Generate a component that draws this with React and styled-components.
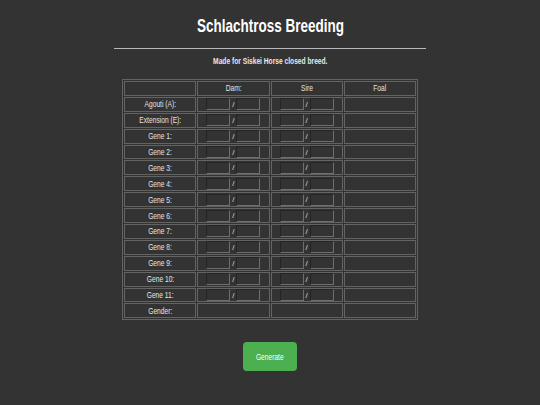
import React from 'react'
import styled, { createGlobalStyle } from 'styled-components'

const rows = [
  'Agouti (A):',
  'Extension (E):',
  'Gene 1:',
  'Gene 2:',
  'Gene 3:',
  'Gene 4:',
  'Gene 5:',
  'Gene 6:',
  'Gene 7:',
  'Gene 8:',
  'Gene 9:',
  'Gene 10:',
  'Gene 11:',
]

function AlleleInput() {
  return (
    <Pair>
      <Allele type="text" />
      <Slash>/</Slash>
      <Allele type="text" />
    </Pair>
  )
}

export default function App() {
  return (
    <>
      <GlobalStyle />
      <Page>
        <Title><Narrow scale={0.71}>Schlachtross Breeding</Narrow></Title>
        <Rule />
        <Subtitle><Narrow>Made for Siskei Horse closed breed.</Narrow></Subtitle>

        <Table>
          <thead>
            <tr>
              <Cell></Cell>
              <Cell><Narrow>Dam:</Narrow></Cell>
              <Cell><Narrow>Sire</Narrow></Cell>
              <Cell><Narrow>Foal</Narrow></Cell>
            </tr>
          </thead>
          <tbody>
            {rows.map((label) => (
              <tr key={label}>
                <Cell><Narrow>{label}</Narrow></Cell>
                <Cell><AlleleInput /></Cell>
                <Cell><AlleleInput /></Cell>
                <Cell></Cell>
              </tr>
            ))}
            <tr>
              <Cell><Narrow>Gender:</Narrow></Cell>
              <Cell></Cell>
              <Cell></Cell>
              <Cell></Cell>
            </tr>
          </tbody>
        </Table>

        <Button><Narrow>Generate</Narrow></Button>
      </Page>
    </>
  )
}

const GlobalStyle = createGlobalStyle`
  html, body {
    margin: 0;
    padding: 0;
    background: #333333;
  }
  * {
    box-sizing: border-box;
  }
`
const Page = styled.div`
  width: 540px;
  height: 405px;
  display: flex;
  flex-direction: column;
  align-items: center;
  padding-top: 15px;
  color: #ffffff;
  font-family: "Liberation Sans", Arial, sans-serif;
`
// the reference text is horizontally condensed
const Narrow = styled.span`
  display: inline-block;
  white-space: nowrap;
  transform: scaleX(${(props) => props.scale || 0.74});
`
const Title = styled.h1`
  margin: 0;
  font-size: 19px;
  line-height: 22px;
  font-weight: bold;
`
const Rule = styled.div`
  width: 312px;
  height: 1px;
  margin-top: 11px;
  background: #b8b8b8;
`
const Subtitle = styled.p`
  margin: 7px 0 0;
  font-size: 9px;
  line-height: 11px;
  font-weight: bold;
  color: #e8e8e8;
`
const Table = styled.table`
  margin-top: 12px;
  width: 296px;
  border: 1px solid #636363;
  border-spacing: 1px;
  table-layout: fixed;
`
const Cell = styled.td`
  height: 14.9px;
  padding: 0;
  border: 1px solid #636363;
  text-align: center;
  vertical-align: middle;
  font-size: 9px;
  color: #e4e4e4;
`
const Pair = styled.div`
  display: flex;
  align-items: center;
  justify-content: center;
  gap: 2px;
`
const Allele = styled.input`
  width: 24px;
  height: 12px;
  padding: 0;
  background: #333333;
  border: 1px solid;
  border-color: #242424 #6e6e6e #6e6e6e #242424;
  outline: none;
`
const Slash = styled.span`
  font-size: 8px;
  color: #d6d6d6;
`
const Button = styled.button`
  margin-top: 22px;
  width: 54px;
  height: 29px;
  border: none;
  border-radius: 4px;
  background: #4caf50;
  color: #ffffff;
  font-family: inherit;
  font-size: 9px;
  cursor: pointer;
`
